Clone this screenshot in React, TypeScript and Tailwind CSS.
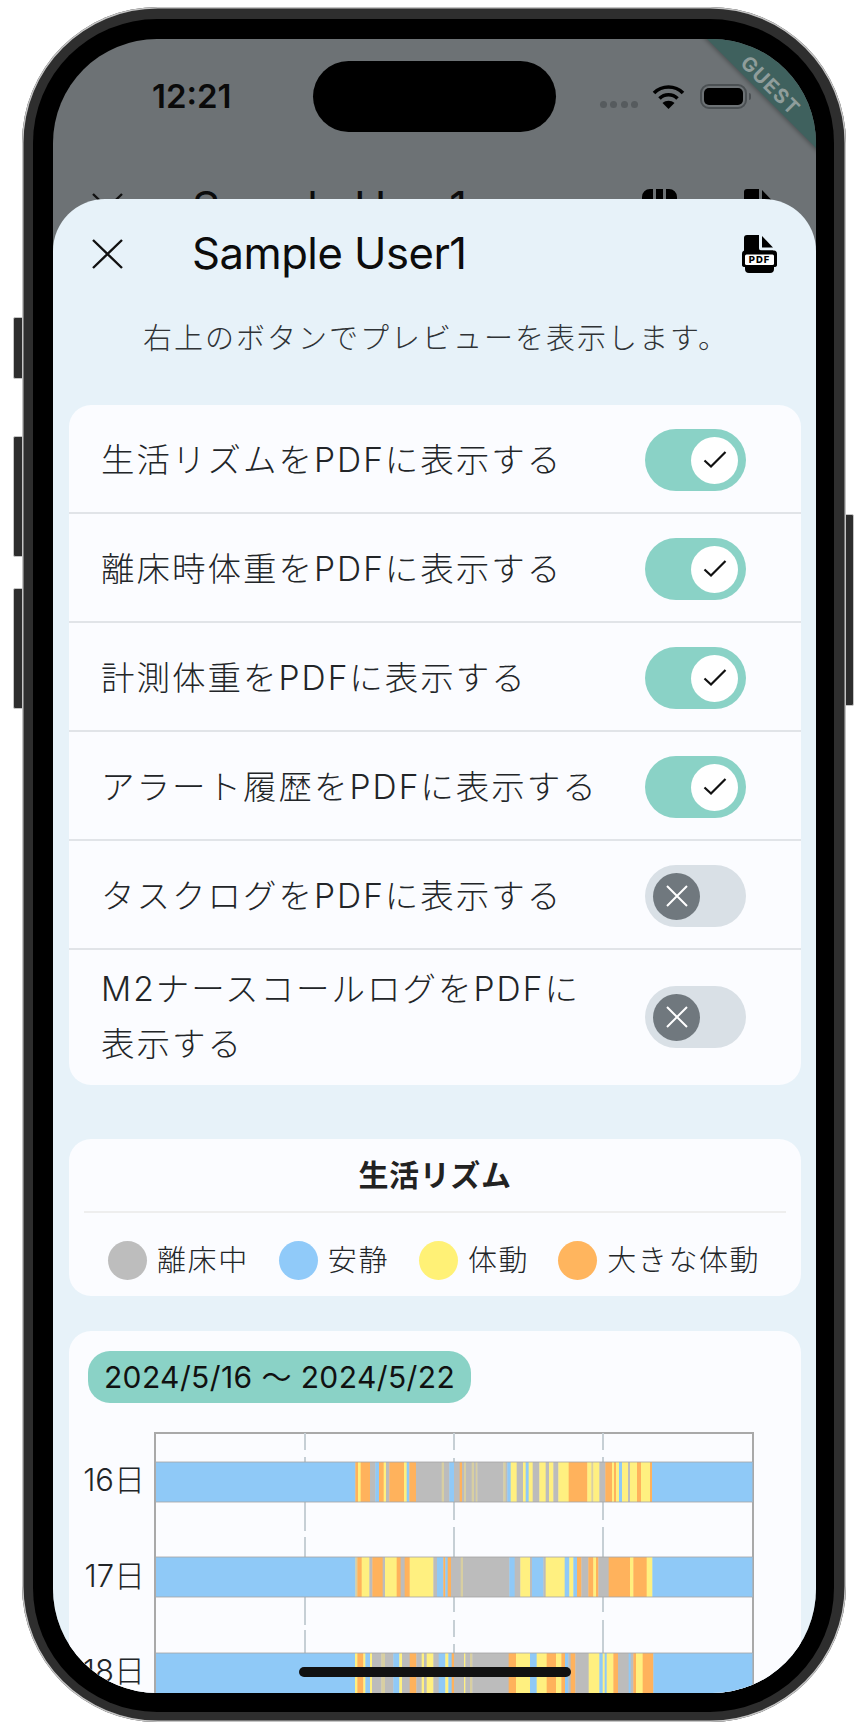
const COLORS: Record<string, string> = {
  b: "#8fc9f7",
  g: "#bcbcbc",
  y: "#fff080",
  o: "#ffb25c",
  t: "#d8cfa2",
};

// each segment: [end x read off a 3x crop, colour key]
type Seg = [number, string];
const toPx = (base: number, segs: Seg[]) => segs.map(([x, c]) => [base + x / 3, c] as [number, string]);

const ROWS: { label: string; y: number; h: number; segs: [number, string][] }[] = [
  {
    label: "16日",
    y: 1462,
    h: 40,
    segs: [
      ...toPx(340, [
        [46, "b"], [54, "o"], [62, "y"], [90, "o"], [106, "g"], [117, "b"], [131, "o"], [138, "y"], [148, "g"],
        [192, "o"], [200, "y"], [208, "b"], [228, "o"], [305, "g"], [312, "t"], [328, "g"], [342, "b"], [359, "g"],
        [366, "o"], [372, "g"], [378, "t"], [395, "g"], [402, "t"], [407, "g"], [412, "t"], [490, "g"], [497, "t"],
        [502, "g"], [512, "b"], [530, "y"], [549, "g"], [557, "y"], [566, "b"], [578, "y"], [598, "g"], [617, "y"],
        [627, "g"], [640, "y"], [655, "g"], [686, "y"], [720, "o"],
      ]),
      ...toPx(570, [
        [52, "o"], [64, "y"], [70, "t"], [88, "y"], [106, "g"], [126, "o"], [132, "y"], [138, "o"], [147, "y"],
        [156, "b"], [174, "y"], [180, "g"], [201, "y"], [213, "o"], [240, "y"], [246, "o"], [549, "b"],
      ]),
    ],
  },
  {
    label: "17日",
    y: 1557,
    h: 40,
    segs: toPx(340, [
      [46, "b"], [52, "t"], [65, "o"], [88, "y"], [97, "g"], [128, "o"], [135, "g"], [170, "y"], [182, "o"],
      [194, "g"], [209, "o"], [280, "y"], [291, "g"], [310, "b"], [316, "o"], [323, "b"], [333, "o"], [362, "g"],
      [369, "t"], [508, "g"], [524, "b"], [541, "g"], [570, "y"], [576, "g"], [610, "b"], [617, "g"], [674, "y"],
      [688, "b"], [700, "y"], [711, "b"], [724, "o"], [745, "g"], [760, "o"], [768, "y"], [775, "o"], [806, "g"],
      [870, "o"], [880, "y"], [920, "o"], [937, "y"], [1237, "b"],
    ]),
  },
  {
    label: "18日",
    y: 1653,
    h: 42,
    segs: toPx(340, [
      [45, "b"], [52, "y"], [70, "o"], [76, "y"], [90, "b"], [96, "y"], [124, "g"], [135, "t"], [160, "g"],
      [178, "b"], [186, "y"], [209, "g"], [229, "o"], [245, "g"], [252, "y"], [260, "g"], [280, "y"], [296, "g"],
      [316, "b"], [325, "y"], [335, "b"], [342, "o"], [372, "g"], [376, "y"], [390, "g"], [397, "t"], [506, "g"],
      [528, "o"], [570, "y"], [590, "b"], [620, "y"], [648, "o"], [664, "y"], [675, "o"], [685, "b"], [692, "g"],
      [706, "o"], [746, "g"], [778, "y"], [788, "b"], [794, "y"], [800, "b"], [820, "y"], [834, "o"], [866, "g"],
      [872, "b"], [880, "g"], [888, "o"], [908, "y"], [940, "o"], [1237, "b"],
    ]),
  },
];

const GRID_LINES: { x: number; dashes: [number, number][] }[] = [
  { x: 305, dashes: [[1433, 1450], [1457, 1462], [1502, 1531], [1537, 1557], [1597, 1625], [1630, 1653]] },
  { x: 454, dashes: [[1433, 1450], [1458, 1462], [1502, 1520], [1527, 1557], [1597, 1612], [1620, 1637], [1644, 1653]] },
  { x: 603, dashes: [[1433, 1450], [1457, 1462], [1502, 1520], [1527, 1557], [1597, 1612], [1620, 1653]] },
];

const SETTINGS = [
  { label: "生活リズムをPDFに表示する", on: true },
  { label: "離床時体重をPDFに表示する", on: true },
  { label: "計測体重をPDFに表示する", on: true },
  { label: "アラート履歴をPDFに表示する", on: true },
  { label: "タスクログをPDFに表示する", on: false },
  { label: "M2ナースコールログをPDFに表示する", on: false },
];

const LEGEND = [
  { label: "離床中", color: "bg-[#bdbdbd]", cls: "mr-[30px]" },
  { label: "安静", color: "bg-[#90caf9]", cls: "mr-[30px]" },
  { label: "体動", color: "bg-[#fff176]", cls: "mr-[29px]" },
  { label: "大きな体動", color: "bg-[#ffb55e]", cls: "" },
];

function Toggle({ on }: { on: boolean }) {
  return (
    <div
      className={
        on
          ? "flex h-[62px] w-[101px] shrink-0 items-center justify-end rounded-full bg-[#8ad2c6] px-[8px]"
          : "flex h-[62px] w-[101px] shrink-0 items-center justify-start rounded-full bg-[#d9e0e6] px-[8px]"
      }
    >
      <div
        className={
          on
            ? "flex h-[47px] w-[47px] items-center justify-center rounded-full bg-white"
            : "flex h-[47px] w-[47px] items-center justify-center rounded-full bg-[#70787e]"
        }
      >
        {on ? (
          <svg width="24" height="20" viewBox="0 0 24 20" fill="none" stroke="#111" strokeWidth="2.2">
            <path d="M1.5 10.5 L8 16.5 L22.5 2" />
          </svg>
        ) : (
          <svg width="22" height="22" viewBox="0 0 22 22" fill="none" stroke="#fff" strokeWidth="2">
            <path d="M1 1 L21 21 M21 1 L1 21" />
          </svg>
        )}
      </div>
    </div>
  );
}

function CloseIcon() {
  return (
    <svg width="31" height="30" viewBox="0 0 31 30" fill="none" stroke="#111" strokeWidth="2.4">
      <path d="M1 1 L30 29 M30 1 L1 29" />
    </svg>
  );
}

// document with folded corner and a boxed PDF label
function PdfIcon({ className }: { className?: string }) {
  return (
    <svg className={className} width="35" height="38" viewBox="0 0 35 38">
      <path d="M2 3 Q2 0 5 0 H17 V13 Q17 15.5 19.5 15.5 H31 V20 H2 Z" fill="#000" />
      <path d="M20 1 L31 12.5 H20 Z" fill="#000" />
      <path d="M0 19 Q0 15.5 3 15.5 H32 Q35 15.5 35 19 V30 Q35 32 32 32 V34 Q32 38 28 38 H7 Q3 38 3 34 V32 Q0 32 0 30 Z" fill="#000" />
      <rect x="3" y="19.5" width="29" height="10.5" rx="1.5" fill="#fff" />
      <text
        x="17.5"
        y="28.4"
        textAnchor="middle"
        fontSize="9.5"
        fontWeight="800"
        letterSpacing="1"
        fontFamily="Inter, sans-serif"
        fill="#000"
      >
        PDF
      </text>
    </svg>
  );
}

function SheetHeader({ extraIcon }: { extraIcon?: boolean }) {
  return (
    <div className="flex h-[110px] shrink-0 items-center px-[39px]">
      <CloseIcon />
      <span className="ml-[69px] text-[43.6px] leading-none tracking-[-0.5px] text-[#0c0c0c]">Sample User1</span>
      {extraIcon && (
        <svg className="ml-auto mr-[65px]" width="35" height="38" viewBox="0 0 35 38" fill="#000">
          <path d="M0 8 a8 8 0 0 1 8-8 h3 v38 h-11z M14 0 h7 v38 h-7z M24 0 h3 a8 8 0 0 1 8 8 v30 h-11z" />
        </svg>
      )}
      <PdfIcon className={extraIcon ? "" : "ml-auto"} />
    </div>
  );
}

function RhythmChart() {
  return (
    <svg width="600" height="262" viewBox="154 1432 600 262" className="block shrink-0">
      <path d="M155 1694 V1433 H753 V1694" fill="none" stroke="#a9a9a9" strokeWidth="2" />
      {GRID_LINES.map((line) =>
        line.dashes.map(([a, b]) => (
          <line key={`${line.x}-${a}`} x1={line.x} x2={line.x} y1={a} y2={b} stroke="#c6cfd5" strokeWidth="2" />
        )),
      )}
      {ROWS.map((row) => {
        let prev = 156;
        return (
          <g key={row.label}>
            {row.segs.map(([end, c]) => {
              const stop = Math.min(end, 752);
              const rect = (
                <rect key={end} x={prev} y={row.y} width={stop - prev + 0.4} height={row.h} fill={COLORS[c]} />
              );
              prev = stop;
              return rect;
            })}
            <path
              d={`M156 ${row.y} H752 M156 ${row.y + row.h} H752`}
              stroke="#a5a5a5"
              strokeOpacity="0.55"
              strokeWidth="1.5"
            />
          </g>
        );
      })}
    </svg>
  );
}

export default function App() {
  return (
    <div className="relative h-[1728px] w-[868px] overflow-hidden bg-white font-['Inter','Noto_Sans_CJK_JP',sans-serif]">
      {/* side buttons */}
      <div className="absolute left-[13px] top-[317px] h-[62px] w-[10px] rounded-l-[2px] border border-[#c4c4c4] bg-[#2d2d2d]" />
      <div className="absolute left-[13px] top-[436px] h-[121px] w-[10px] rounded-l-[2px] border border-[#c4c4c4] bg-[#2d2d2d]" />
      <div className="absolute left-[13px] top-[588px] h-[121px] w-[10px] rounded-l-[2px] border border-[#c4c4c4] bg-[#2d2d2d]" />
      <div className="absolute left-[845px] top-[514px] h-[192px] w-[9px] rounded-r-[2px] border border-[#c4c4c4] bg-[#2d2d2d]" />

      {/* phone frame */}
      <div className="relative ml-[22px] mt-[7px] h-[1715px] w-[824px] rounded-[136px] bg-[#2e2e2e] px-[11px] pt-[12px] shadow-[inset_0_0_0_1.5px_#c4c4c4]">
        <div className="h-[1693px] w-[801px] rounded-[124px] bg-black pb-[19px] pl-[20px] pr-[18px] pt-[20px]">
          <div className="relative h-[1654px] w-[763px] overflow-hidden rounded-[104px] bg-[#6d7275]">
            {/* status bar */}
            <div className="flex h-[114px] items-center pl-[99px] pr-[65px]">
              <span className="text-[33px] font-semibold leading-none text-[#0a0a0a]">12:21</span>
              <div className="ml-auto flex items-center">
                <div className="mr-[14px] mt-[16px] flex gap-[3.5px]">
                  <span className="h-[7px] w-[7px] rounded-full bg-[#565b5e]" />
                  <span className="h-[7px] w-[7px] rounded-full bg-[#565b5e]" />
                  <span className="h-[7px] w-[7px] rounded-full bg-[#565b5e]" />
                  <span className="h-[7px] w-[7px] rounded-full bg-[#565b5e]" />
                </div>
                <svg width="33" height="25" viewBox="0 0 33 25" fill="none" stroke="#000" strokeWidth="3.6">
                  <path d="M2 9 C10 1 23 1 31 9" />
                  <path d="M7.5 14.5 C12.5 9.5 20.5 9.5 25.5 14.5" />
                  <path d="M16.5 25 L10.5 19 C14 16 19 16 22.5 19 Z" fill="#000" stroke="none" />
                </svg>
                <div className="ml-[15px] flex h-[25px] w-[47px] items-center justify-center rounded-[9px] border-2 border-[#4b5053]">
                  <div className="h-[17px] w-[39px] rounded-[5px] bg-black" />
                </div>
                <div className="ml-[2px] h-[7px] w-[2px] rounded-r-full bg-[#4b5053]" />
              </div>
            </div>
            <SheetHeader extraIcon />

            {/* dynamic island */}
            <div className="absolute left-[260px] top-[22px] h-[71px] w-[243px] rounded-full bg-black" />

            {/* flavor banner */}
            <div className="absolute left-[606px] top-[14px] flex h-[48px] w-[240px] rotate-45 items-end justify-center bg-[#3f615e] shadow-[0_2px_4px_rgba(0,0,0,0.25)]">
              <span className="flex h-[24px] items-center text-[20px] font-bold leading-none tracking-[1.2px] text-[#8f9d9b]">
                GUEST
              </span>
            </div>

            {/* bottom sheet */}
            <div className="absolute inset-x-0 bottom-0 top-[160px] overflow-hidden rounded-t-[52px] bg-[#e7f2f9]">
              <SheetHeader />
              <p className="flex h-[58px] items-center justify-center pl-[3px] text-[29px] font-light leading-none tracking-[2px] text-[#2f3336]">
                右上のボタンでプレビューを表示します。
              </p>

              <div className="ml-[16px] mr-[15px] mt-[38px] overflow-hidden rounded-[22px] bg-[#fbfcff]">
                {SETTINGS.map((s, i) => (
                  <div
                    key={s.label}
                    className={
                      i === SETTINGS.length - 1
                        ? "flex h-[135px] items-center pb-[1px] pl-[32px] pr-[55px]"
                        : "flex h-[109px] items-center border-b-2 border-[#e1e4e8] pl-[32px] pr-[55px] pt-[3px]"
                    }
                  >
                    <span className="w-[504px] text-[33.5px] font-light leading-[55px] tracking-[2px] text-[#222528]">
                      {s.label}
                    </span>
                    <div className="ml-auto">
                      <Toggle on={s.on} />
                    </div>
                  </div>
                ))}
              </div>

              <div className="ml-[16px] mr-[15px] mt-[54px] h-[157px] rounded-[22px] bg-[#fbfcff] px-[15px]">
                <div className="flex h-[74px] items-center justify-center border-b-2 border-[#eeeeee] text-[30px] font-bold leading-none tracking-[0.6px] text-[#222222]">
                  生活リズム
                </div>
                <div className="flex items-center pl-[24px] pt-[28px]">
                  {LEGEND.map((l) => (
                    <div key={l.label} className={`flex items-center ${l.cls}`}>
                      <span className={`h-[39px] w-[39px] rounded-full ${l.color}`} />
                      <span className="ml-[10px] text-[29px] font-light leading-none tracking-[1.6px] text-[#222528]">
                        {l.label}
                      </span>
                    </div>
                  ))}
                </div>
              </div>

              <div className="ml-[16px] mr-[15px] mt-[35px] h-[420px] rounded-[22px] bg-[#fbfcff] pt-[20px]">
                <div className="ml-[19px] flex h-[52px] w-[383px] items-center justify-center rounded-[22px] bg-[#8ad2c6] text-[30px] leading-none tracking-[0.4px] text-[#111111]">
                  2024/5/16 〜 2024/5/22
                </div>
                <div className="mt-[29px] flex">
                  <div className="w-[85px] pr-[9px]">
                    {ROWS.map((row) => (
                      <div
                        key={row.label}
                        className="flex h-[95.5px] items-center justify-end text-[31px] font-light leading-none text-[#222528]"
                      >
                        {row.label}
                      </div>
                    ))}
                  </div>
                  <RhythmChart />
                </div>
              </div>
            </div>

            {/* home indicator */}
            <div className="absolute bottom-[16px] left-[246px] h-[10px] w-[272px] rounded-full bg-[#111111]" />
          </div>
        </div>
      </div>
    </div>
  );
}
